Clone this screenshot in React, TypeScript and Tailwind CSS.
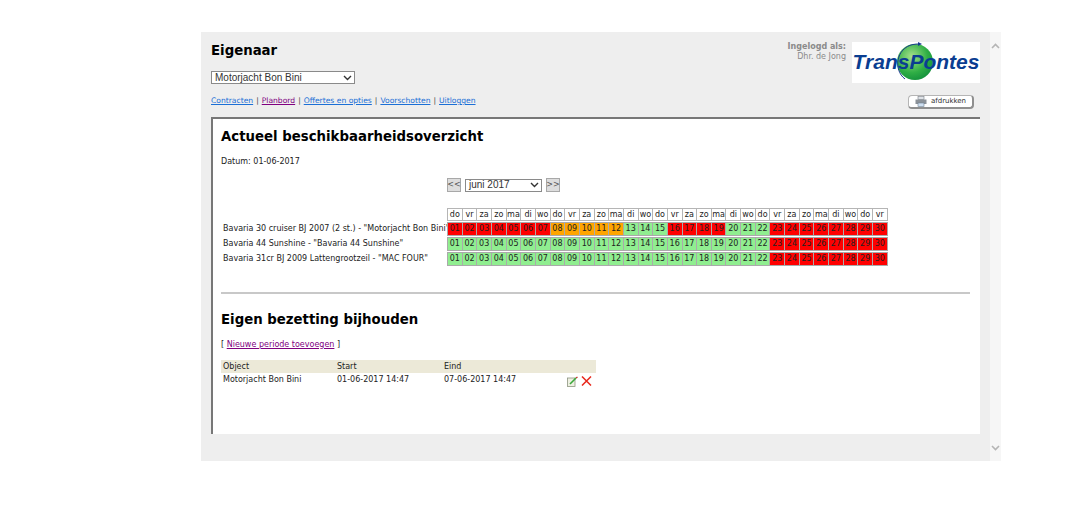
import React from "react";

const days = ["do","vr","za","zo","ma","di","wo"];
const head = Array.from({ length: 30 }, (_, i) => days[i % 7]);
const nums = Array.from({ length: 30 }, (_, i) => String(i + 1).padStart(2, "0"));

const R = "bg-[#ff0000]";
const O = "bg-[#ffa500]";
const G = "bg-[#90ee90]";
const row1 = (i: number) => {
  const d = i + 1;
  if (d <= 7) return R;
  if (d <= 12) return O;
  if (d <= 15) return G;
  if (d <= 19) return R;
  if (d <= 22) return G;
  return R;
};
const row2 = (i: number) => (i + 1 <= 22 ? G : R);

const rows = [
  { label: 'Bavaria 30 cruiser BJ 2007 (2 st.) - "Motorjacht Bon Bini"', c: row1 },
  { label: 'Bavaria 44 Sunshine - "Bavaria 44 Sunshine"', c: row2 },
  { label: 'Bavaria 31cr BJ 2009 Lattengrootzeil - "MAC FOUR"', c: row2 },
];

function Chevron({ className = "" }: { className?: string }) {
  return (
    <svg width="9" height="6" viewBox="0 0 9 6" className={className}>
      <path d="M1 1l3.5 3.5L8 1" fill="none" stroke="#333" strokeWidth="1.4" />
    </svg>
  );
}

function Select({ w, text }: { w: string; text: string }) {
  return (
    <div className={`${w} h-[11px] box-content border border-[#8a8a8a] bg-white flex items-center justify-between pl-[3px] pr-[2px] text-[10px] leading-none text-[#333] font-['Liberation_Sans',sans-serif]`}>
      <span>{text}</span>
      <Chevron />
    </div>
  );
}

function Logo() {
  return (
    <div className="relative w-[128px] h-[41px] bg-white overflow-hidden">
      <svg width="128" height="41" viewBox="0 0 128 41" className="absolute left-0 top-0">
        <defs>
          <radialGradient id="g" cx="0.4" cy="0.35" r="0.75">
            <stop offset="0" stopColor="#a5e08a" />
            <stop offset="0.6" stopColor="#2fae45" />
            <stop offset="1" stopColor="#0d8a3a" />
          </radialGradient>
        </defs>
        <circle cx="63" cy="20" r="18" fill="url(#g)" />
        <path d="M53 37C41 28 44 6 61 2.5c2-.4 4-.5 5.500-.5" fill="none" stroke="#1a3a8f" strokeWidth="1" />
        <path d="M66 0l4 2-4 2z" fill="#1a3a8f" />
      </svg>
      <span className="absolute left-0 top-[8px] w-full text-center text-[21px] leading-[24px] font-bold italic text-[#0a3d91] whitespace-nowrap font-['Liberation_Sans',sans-serif]">
        TransPontes
      </span>
    </div>
  );
}

function PrinterIcon() {
  return (
    <svg width="12" height="11" viewBox="0 0 12 11">
      <rect x="3" y="0.5" width="6" height="3" fill="#dfe3e8" stroke="#7a7f86" strokeWidth="0.6" />
      <rect x="0.500" y="3.500" width="11" height="4.500" fill="#8c9299" />
      <rect x="3" y="7" width="6" height="3.500" fill="#cfe0f2" stroke="#6f7f90" strokeWidth="0.6" />
    </svg>
  );
}

function EditIcon() {
  return (
    <svg width="11" height="11" viewBox="0 0 11 11">
      <rect x="0.500" y="2" width="7.500" height="8.500" fill="#eef0e2" stroke="#8d9480" strokeWidth="0.8" />
      <path d="M3 8l6-6" stroke="#3aa83a" strokeWidth="1.600" />
      <path d="M9 2l1.500-1" stroke="#c8352b" strokeWidth="1.400" />
    </svg>
  );
}

function CrossIcon() {
  return (
    <svg width="11" height="10" viewBox="0 0 11 10">
      <path d="M1 .5l9 9M10 .5l-9 9" stroke="#e8281c" strokeWidth="1.500" />
    </svg>
  );
}

export default function App() {
  return (
    <div className="w-[1080px] h-[520px] bg-white pt-[32px] pl-[201px] flex items-start font-['DejaVu_Sans',sans-serif] text-[8px] text-[#222] overflow-hidden">
      <div className="w-[789px] h-[429px] bg-[#eeeeee] flex flex-col pl-[10px] pr-[10px]">
        <div className="h-[85px] flex justify-between">
          <div className="flex flex-col">
            <h1 className="mt-[10px] text-[13.3px] leading-[17px] font-bold text-black">Eigenaar</h1>
            <div className="mt-[12px]">
              <Select w="w-[137px]" text="Motorjacht Bon Bini" />
            </div>
            <div className="mt-[11px] leading-[11px] flex gap-[3px] text-[#444] text-[7.6px]">
              <a className="underline text-[#1b6fd6]">Contracten</a>
              <span>|</span>
              <a className="underline text-[#800080]">Planbord</a>
              <span>|</span>
              <a className="underline text-[#1b6fd6]">Offertes en opties</a>
              <span>|</span>
              <a className="underline text-[#1b6fd6]">Voorschotten</a>
              <span>|</span>
              <a className="underline text-[#1b6fd6]">Uitloggen</a>
            </div>
          </div>
          <div className="flex flex-col items-end">
            <div className="mt-[10px] flex gap-[6px]">
              <div className="text-right leading-[10px] text-[#8a8a8a]">
                <div className="font-bold">Ingelogd als:</div>
                <div>Dhr. de Jong</div>
              </div>
              <Logo />
            </div>
            <div className="mt-[12px] mr-[6px] w-[66px] h-[14px] bg-white border border-[#b5b5b5] border-b-2 border-r-2 border-b-[#8f8f8f] border-r-[#8f8f8f] rounded-[4px] flex items-center justify-center gap-[4px] text-[7px] text-[#333]">
              <PrinterIcon />
              <span>afdrukken</span>
            </div>
          </div>
        </div>
        <main className="w-[769px] h-[317px] bg-white border-l-2 border-t-2 border-[#777777] pl-[8px] pr-[10px] flex flex-col">
          <h2 className="mt-[9px] text-[13.3px] leading-[17px] font-bold text-black">Actueel beschikbaarheidsoverzicht</h2>
          <p className="mt-[11px] leading-[11px]">Datum: 01-06-2017</p>
          <div className="mt-[11px] ml-[226px] flex items-center gap-[4px] h-[14px]">
            <div className="w-[14px] h-[14px] bg-[#dddddd] border border-[#a8a8a8] flex items-center justify-center text-[8px] text-[#555]">&lt;&lt;</div>
            <Select w="w-[70px]" text="juni 2017" />
            <div className="w-[14px] h-[14px] bg-[#dddddd] border border-[#a8a8a8] flex items-center justify-center text-[8px] text-[#555]">&gt;&gt;</div>
          </div>
          <div className="mt-[16px] grid grid-cols-[226px_repeat(30,14.667px)] grid-rows-[14px_15px_15px_15px] items-start">
            <div className="h-[13px]" />
            {head.map((d, i) => (
              <div key={i} className="h-[13px] bg-white border border-[#b5b5b5] -mr-[1px] flex items-center justify-center leading-none">{d}</div>
            ))}
            {rows.map((r) => (
              <React.Fragment key={r.label}>
                <div className="h-[14px] pl-[2px] whitespace-nowrap flex items-center leading-none">{r.label}</div>
                {nums.map((n, i) => (
                  <div key={n} className={`h-[14px] ${r.c(i)} border border-[#aaaaaa] -mr-[1px] flex items-center justify-center leading-none text-[#222]`}>{n}</div>
                ))}
              </React.Fragment>
            ))}
          </div>
          <hr className="mt-[25px] border-t-2 border-[#c8c8c8]" />
          <h2 className="mt-[17px] text-[13.3px] leading-[17px] font-bold text-black">Eigen bezetting bijhouden</h2>
          <p className="mt-[11px] leading-[11px]">
            [ <a className="underline text-[#800080]">Nieuwe periode toevoegen</a> ]
          </p>
          <div className="mt-[10px] w-[375px]">
            <div className="h-[13px] bg-[#ece9d8] flex items-center pl-[2px] leading-none">
              <span className="w-[114px]">Object</span>
              <span className="w-[107px]">Start</span>
              <span>Eind</span>
            </div>
            <div className="h-[14px] flex items-center pl-[2px] leading-none">
              <span className="w-[114px]">Motorjacht Bon Bini</span>
              <span className="w-[107px]">01-06-2017 14:47</span>
              <span className="w-[123px]">07-06-2017 14:47</span>
              <span className="flex gap-[3px] mt-[3px]"><EditIcon /><CrossIcon /></span>
            </div>
          </div>
        </main>
      </div>
      <div className="w-[11px] h-[429px] bg-[#f6f6f6] flex flex-col justify-between items-center pt-[11px] pb-[10px]">
        <svg width="9" height="6" viewBox="0 0 9 6"><path d="M1 5l3.500-3.500L8 5" fill="none" stroke="#b5b5b5" strokeWidth="1.600" /></svg>
        <svg width="9" height="6" viewBox="0 0 9 6"><path d="M1 1l3.500 3.500L8 1" fill="none" stroke="#b5b5b5" strokeWidth="1.600" /></svg>
      </div>
    </div>
  );
}
